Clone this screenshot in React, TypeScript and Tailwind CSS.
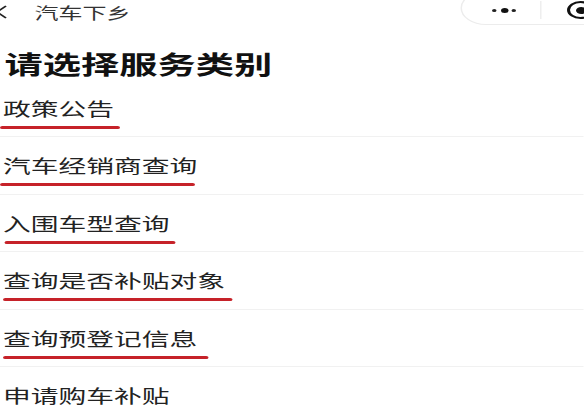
import React from 'react';

const items = [
  { label: '政策公告', line: 'w-[80px] ml-0' },
  { label: '汽车经销商查询', line: 'w-[130px] ml-0' },
  { label: '入围车型查询', line: 'w-[114px] ml-[3px]' },
  { label: '查询是否补贴对象', line: 'w-[153px] ml-[2px]' },
  { label: '查询预登记信息', line: 'w-[137px] ml-[2px]' },
  { label: '申请购车补贴', line: 'w-[112px] ml-[5px]' },
];

const App: React.FC = () => {
  return (
    <div className="w-[584px] h-[412px] overflow-hidden bg-white font-['Noto_Sans_CJK_SC','Noto_Sans',sans-serif]">
      {/* the screenshot is stretched horizontally, so lay out narrow and widen */}
      <div className="w-[389px] origin-top-left scale-x-150">
        <div className="flex h-6 items-center justify-between">
          <div className="flex items-center">
            <svg width="10" height="16" viewBox="0 0 10 16" className="ml-[-4px]">
              <polyline points="8,2 2,8 8,14" fill="none" stroke="#222" strokeWidth="1.4" />
            </svg>
            <span className="ml-[17px] text-[16px] leading-6 text-[#333]">汽车下乡</span>
          </div>
          <div className="mt-[-8px] mr-[-18px] flex h-[34px] w-[100px] items-center rounded-full border border-[#ececec] bg-white">
            <div className="ml-[20px] mt-[4px] flex w-[16px] items-center justify-between">
              <span className="h-[3px] w-[3px] rounded-full bg-[#222]" />
              <span className="h-[5px] w-[5px] rounded-full bg-[#111]" />
              <span className="h-[3px] w-[3px] rounded-full bg-[#222]" />
            </div>
            <span className="ml-[16px] mt-[4px] h-[18px] w-px bg-[#eeeeee]" />
            <span className="ml-[17px] mt-[4px] flex h-[18px] w-[18px] items-center justify-center rounded-full border-[2.5px] border-[#111]">
              <span className="h-[7px] w-[7px] rounded-full bg-[#111]" />
            </span>
          </div>
        </div>

        <h1 className="pl-[3px] pt-[24px] text-[25.5px] font-bold leading-[30px] text-[#111]">请选择服务类别</h1>

        <div className="mt-[1.5px]">
          {items.map((item) => (
            <div key={item.label} className="flex h-[57.5px] flex-col border-b border-[#f1f1f1] pt-[18px]">
              <span className="pl-[2px] text-[18.5px] leading-[20px] text-[#222]">{item.label}</span>
              <span className={`mt-[8px] h-[3px] rounded-full bg-[#c62229] ${item.line}`} />
            </div>
          ))}
        </div>
      </div>
    </div>
  );
};

export default App;
